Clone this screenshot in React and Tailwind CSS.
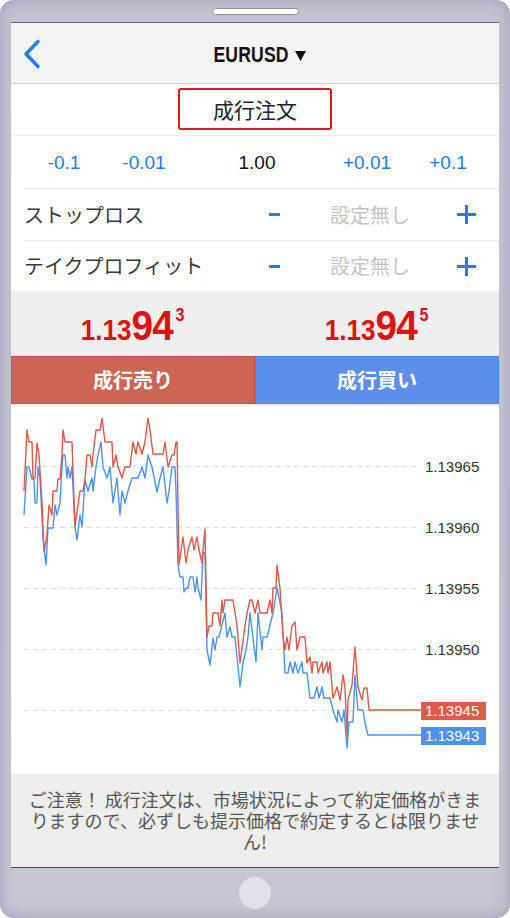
import React from "react";

const RED = "24,491 27,430 29,442 32,442 33,478 35,478 37,443 39,455 42,502 44,552 47,535 49,505 52,515 53,491 57,491 58,479 60,479 62,455 63,430 65,442 72,442 75,527 78,505 80,491 83,491 85,479 87,455 90,455 92,467 93,455 96,430 100,430 102,418 105,442 112,442 113,467 116,455 118,467 122,478 125,467 130,467 133,442 136,454 138,442 142,454 145,442 148,418 150,430 153,454 163,454 165,442 168,467 172,455 174,455 176,442 177,442 179,565 183,537 186,563 188,550 192,537 194,550 197,537 199,550 202,563 203,550 205,529 207,637 209,626 212,626 213,613 218,613 220,626 222,600 223,613 225,600 233,600 237,625 240,663 245,626 247,613 250,600 252,600 255,613 258,600 260,613 267,613 270,600 272,613 273,588 276,588 277,565 280,588 283,637 285,650 287,637 289,650 292,626 295,622 297,650 300,637 305,637 307,663 310,657 312,673 313,662 317,662 318,673 322,662 323,673 327,662 328,673 330,662 333,698 337,687 340,700 343,675 345,687 347,737 348,700 352,685 355,647 358,687 362,700 364,688 367,688 369,710 421,710";

const BLUE = "24,515 27,467 29,467 32,479 34,479 35,503 37,503 38,467 40,478 43,538 46,565 48,528 53,528 55,505 57,515 60,503 62,467 63,455 65,455 67,478 68,467 70,478 72,467 75,527 77,540 80,515 82,527 85,480 88,491 92,478 93,491 96,467 98,455 101,442 103,467 107,478 110,467 113,503 117,478 120,515 122,491 125,503 128,491 132,478 138,478 142,467 145,478 148,455 152,467 157,492 160,478 163,467 167,503 169,491 172,467 175,467 176,491 178,565 180,577 183,577 184,592 186,588 188,588 190,577 193,577 195,592 197,577 198,588 201,600 203,553 205,553 207,650 210,665 213,638 215,650 217,637 219,637 225,613 227,637 230,627 232,637 235,637 240,687 243,663 246,650 248,637 250,613 253,638 256,662 258,613 262,650 263,637 267,637 270,625 273,613 277,588 282,613 285,673 288,673 290,662 293,673 295,662 298,673 302,662 303,673 307,673 310,698 314,698 317,687 319,698 322,687 324,698 330,698 333,710 337,722 338,710 342,722 344,710 347,748 349,722 353,722 355,675 358,710 363,710 365,723 368,735 421,735";

const JP = { fontFamily: '"Noto Sans CJK JP", "Noto Sans", sans-serif' };
const LAT = { fontFamily: '"Liberation Sans", Arial, sans-serif' };

function Plus() {
  return (
    <svg width="19" height="19" viewBox="0 0 19 19">
      <rect x="8" y="0" width="3" height="19" fill="#1a7ef5" />
      <rect x="0" y="8" width="19" height="3" fill="#1a7ef5" />
    </svg>
  );
}

function SettingRow({ label, h }) {
  return (
    <div className={`flex items-center border-t border-[#e8e8e8] ml-[13px] ${h}`}>
      <div className="w-[245px] text-[20px] text-[#3a3a3a] leading-none" style={JP}>
        {label}
      </div>
      <div className="w-[11px] h-[3px] bg-[#1a7ef5]" />
      <div className="ml-[50px] w-[80px] text-[20px] text-[#c4c4c4] leading-none" style={JP}>
        設定無し
      </div>
      <div className="ml-[47px] flex items-center">
        <Plus />
      </div>
    </div>
  );
}

function Price({ big, sup }) {
  return (
    <div className="flex-1 flex justify-center items-center">
      <div className="inline-flex items-baseline scale-x-90 text-[#e0110e] font-bold leading-none" style={LAT}>
        <span className="text-[29px]">1.13</span>
        <span className="text-[43px] tracking-[-1px]">{big}</span>
        <span className="self-start text-[18px] ml-[3px] mt-[2px]">{sup}</span>
      </div>
    </div>
  );
}

function Chart() {
  const grid = [466, 527, 588, 649, 710];
  const labels = [
    ["1.13965", 466],
    ["1.13960", 527],
    ["1.13955", 588],
    ["1.13950", 649],
  ];
  return (
    <div className="h-[368px] bg-white">
      <svg width="488" height="368" viewBox="11 406 488 368" className="block">
        {grid.map((y) => (
          <line key={y} x1="24" x2="418" y1={y + 0.5} y2={y + 0.5} stroke="#dcdcdc" strokeWidth="1" strokeDasharray="5 4" />
        ))}
        {labels.map(([t, y]) => (
          <text key={t} x="425" y={y + 5.5} fontSize="15" fill="#333" fontFamily='"Liberation Sans", Arial, sans-serif'>
            {t}
          </text>
        ))}
        <polyline points={BLUE} fill="none" stroke="#4b93f0" strokeWidth="1.4" strokeLinejoin="round" />
        <polyline points={RED} fill="none" stroke="#e0574b" strokeWidth="1.4" strokeLinejoin="round" />
        <rect x="421" y="702" width="65" height="18" fill="#df5a4b" />
        <text x="425" y="716" fontSize="15" fill="#fff" fontFamily='"Liberation Sans", Arial, sans-serif'>1.13945</text>
        <rect x="421" y="727" width="65" height="18" fill="#4b93f0" />
        <text x="425" y="741" fontSize="15" fill="#fff" fontFamily='"Liberation Sans", Arial, sans-serif'>1.13943</text>
      </svg>
    </div>
  );
}

export default function App() {
  return (
    <div className="w-[510px] h-[918px] bg-white">
      <div className="w-full h-full rounded-[14px] bg-gradient-to-b from-[#c3c2d1] to-[#c6c5d3] shadow-[inset_0_0_14px_rgba(130,128,160,0.55)] flex flex-col px-[11px]">
        {/* top bezel */}
        <div className="h-[22px] flex justify-center pt-[8px]">
          <div className="w-[87px] h-[7px] rounded-full bg-white border border-[#8f8f9c]" />
        </div>

        {/* screen */}
        <div className="h-[846px] flex flex-col bg-white border-t border-t-[#6a6a6a] border-b border-b-[#4a4a4a]">
          {/* nav */}
          <div className="h-[61px] bg-[#f4f4f4] border-b border-[#d4d4d4] grid grid-cols-[60px_1fr_60px] items-center">
            <div className="pl-[12px] pt-[2px]">
              <svg width="20" height="30" viewBox="0 0 20 30">
                <polyline points="15,2.5 3,15 15,27.5" fill="none" stroke="#1a7ef5" strokeWidth="3.4" strokeLinecap="round" strokeLinejoin="round" />
              </svg>
            </div>
            <div className="flex justify-center items-center pt-[3px]">
              <span className="inline-block scale-x-80 font-bold text-[22px] text-[#111] leading-none tracking-[0.2px]" style={LAT}>
                EURUSD
              </span>
              <svg width="11" height="10" viewBox="0 0 11 10" className="ml-[-3px] mt-[2px]">
                <polygon points="0,0 11,0 5.5,10" fill="#111" />
              </svg>
            </div>
            <div />
          </div>

          {/* order type */}
          <div className="h-[52px] border-b border-[#ececec] flex justify-center items-start pt-[4px]">
            <div className="w-[154px] h-[42px] border-2 border-[#ec1414] rounded-[3px] flex items-center justify-center text-[21px] text-[#222] leading-none" style={JP}>
              成行注文
            </div>
          </div>

          {/* quantity */}
          <div className="h-[52px] flex items-center pl-[13px] text-[19px] leading-none" style={LAT}>
            <div className="w-[80px] text-center text-[#1a7ef5]">-0.1</div>
            <div className="w-[80px] text-center text-[#1a7ef5]">-0.01</div>
            <div className="w-[80px] ml-[33px] text-center text-[#111]">1.00</div>
            <div className="w-[80px] ml-[30px] text-center text-[#1a7ef5]">+0.01</div>
            <div className="w-[80px] ml-[1px] text-center text-[#1a7ef5]">+0.1</div>
          </div>

          <SettingRow label="ストップロス" h="h-[52px]" />
          <SettingRow label="テイクプロフィット" h="h-[51px]" />

          {/* prices */}
          <div className="h-[65px] bg-[#efefef] flex pt-[3px]">
            <Price big="94" sup="3" />
            <Price big="94" sup="5" />
          </div>

          {/* buttons */}
          <div className="h-[48px] flex">
            <div className="flex-1 bg-[#cd6454] border border-[#bb5545] flex items-center justify-center text-white font-bold text-[20px] leading-none" style={JP}>
              成行売り
            </div>
            <div className="flex-1 bg-[#5b8fea] border border-[#4d84e6] flex items-center justify-center text-white font-bold text-[20px] leading-none" style={JP}>
              成行買い
            </div>
          </div>
          <div className="h-[2px] bg-[#ececec]" />

          <Chart />

          {/* footer */}
          <div className="h-[93px] bg-[#eeeeee] px-[12px] pt-[15px] text-center text-[18px] leading-[21px] text-[#555]" style={JP}>
            ご注意！ 成行注文は、市場状況によって約定価格がきまりますので、必ずしも提示価格で約定するとは限りません!
          </div>
        </div>

        {/* bottom bezel */}
        <div className="flex-1 flex justify-center items-center">
          <div className="w-[32px] h-[32px] rounded-full bg-[#e1e1ea]" />
        </div>
      </div>
    </div>
  );
}
